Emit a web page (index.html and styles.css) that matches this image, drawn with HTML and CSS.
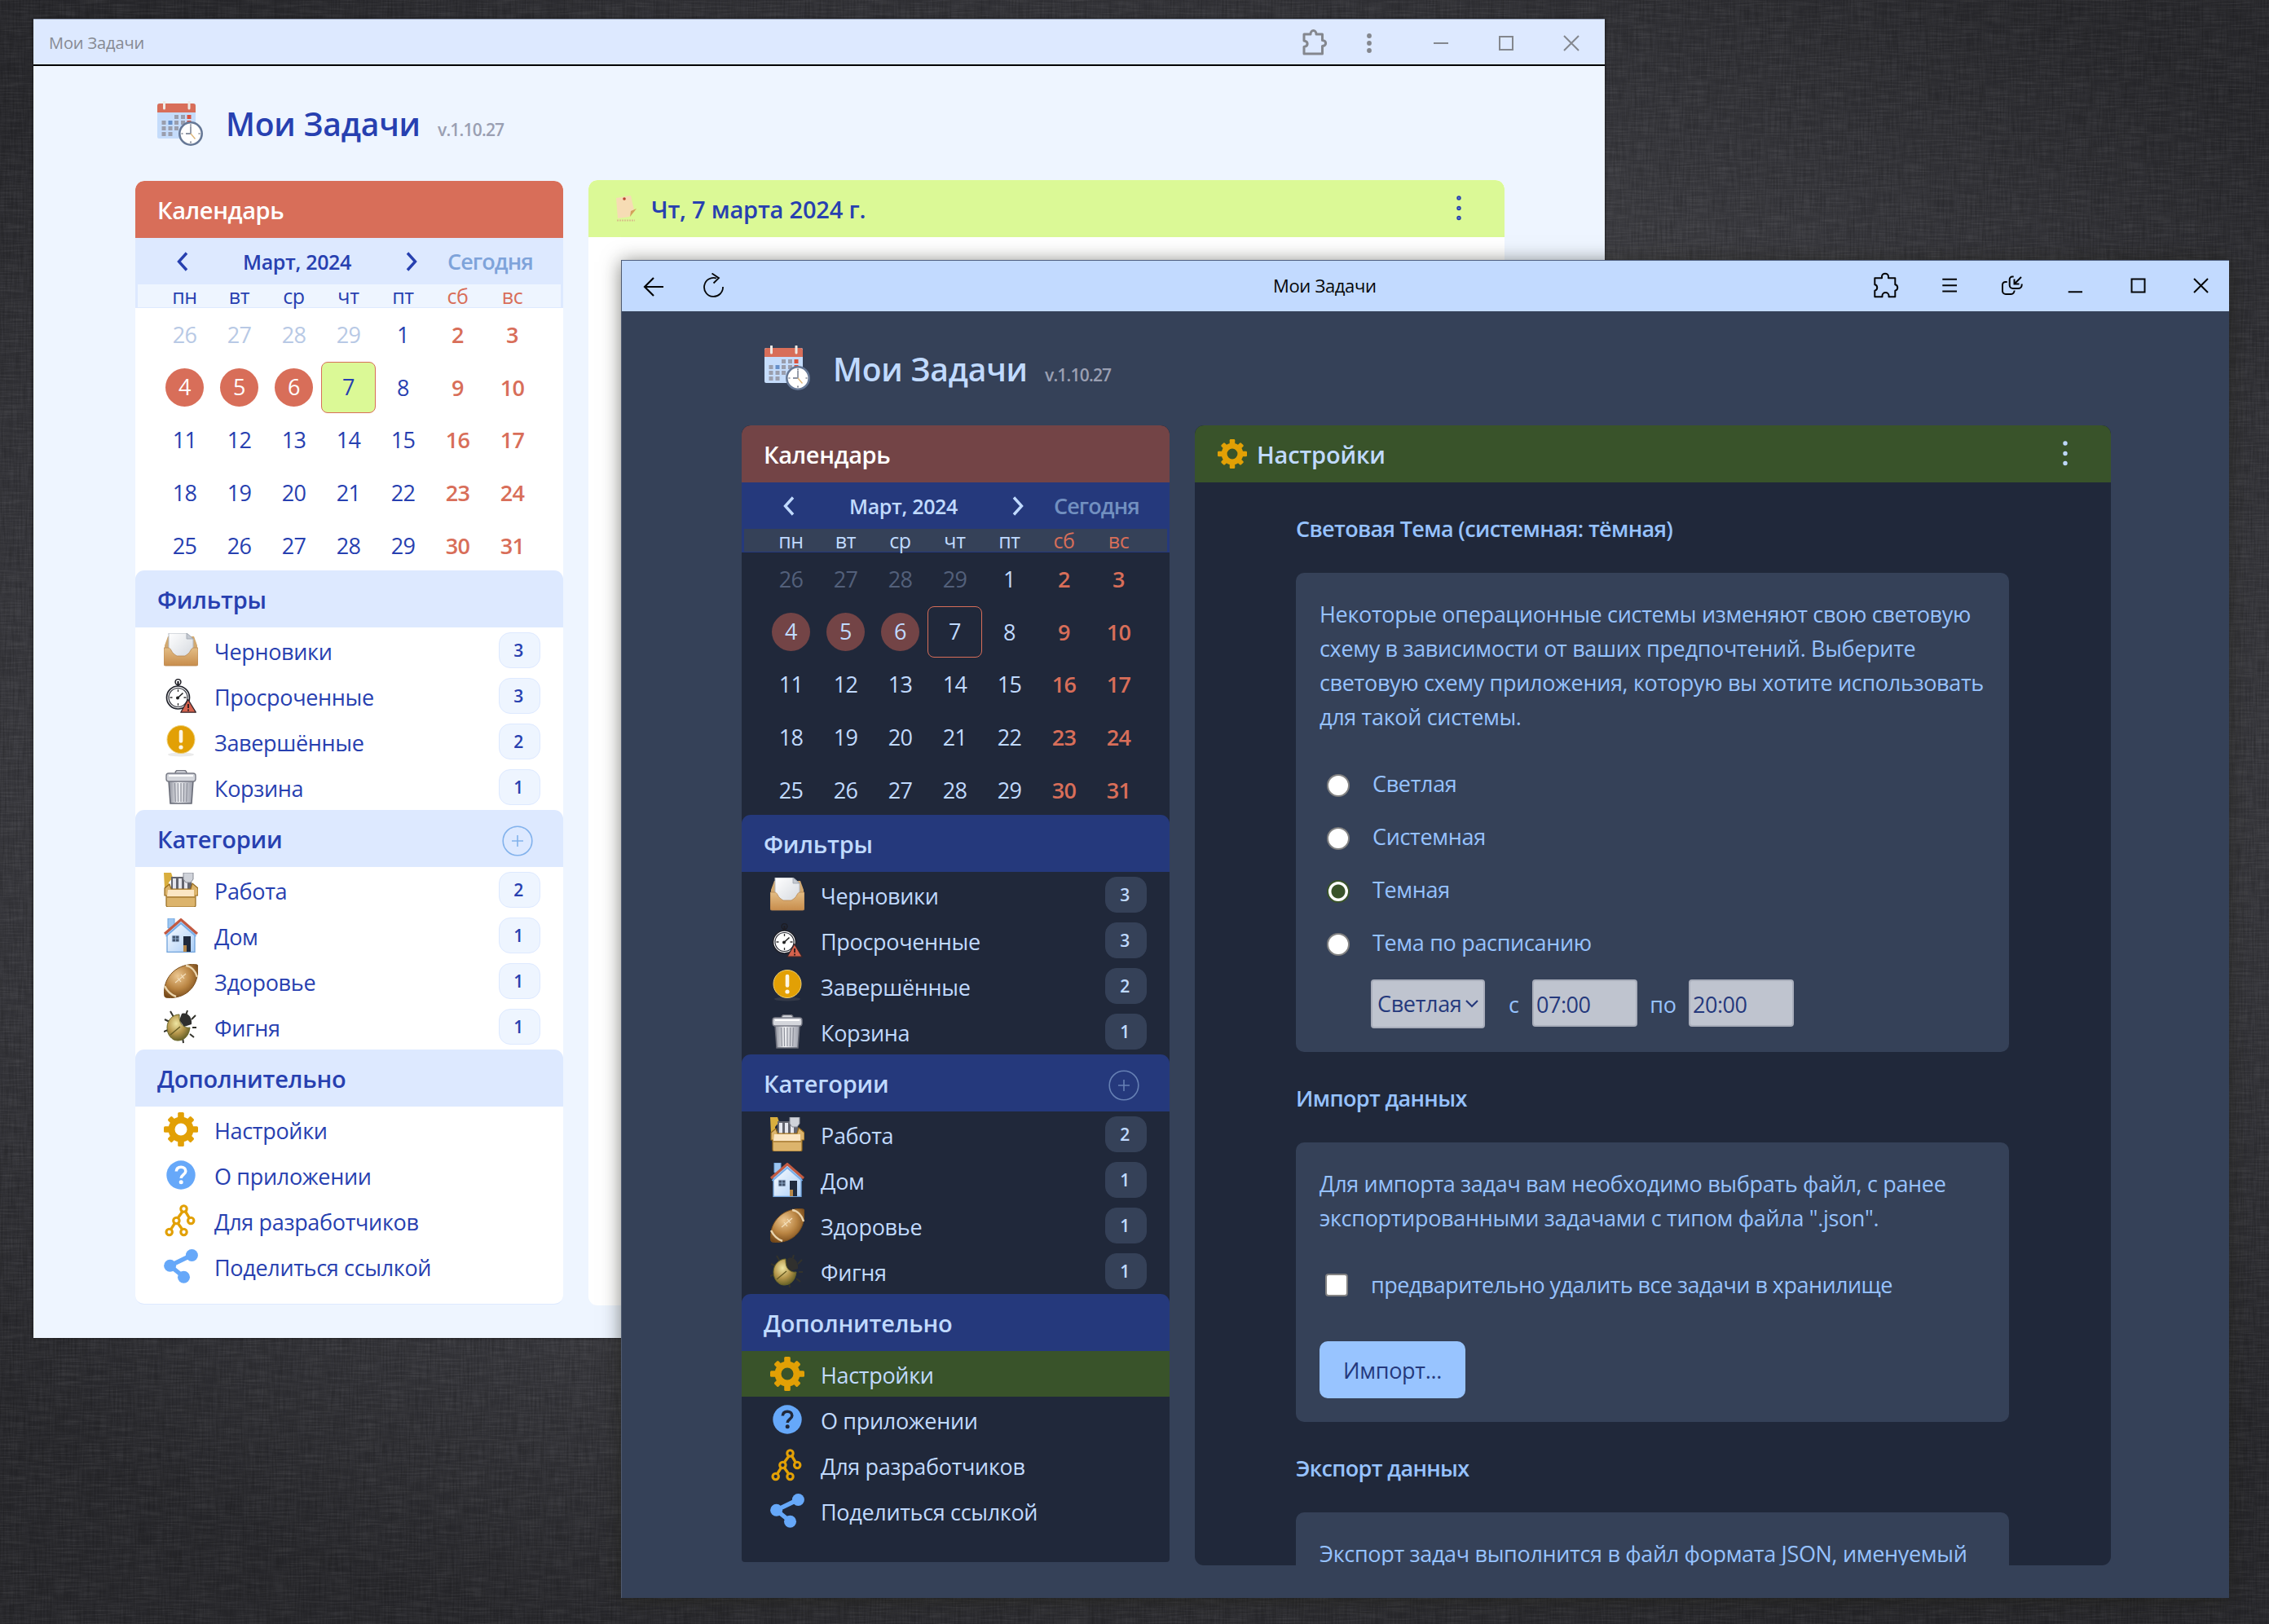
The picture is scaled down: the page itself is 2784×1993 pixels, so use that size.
FILE: index.html
```html
<!DOCTYPE html>
<html lang="ru">
<head>
<meta charset="utf-8">
<title>Мои Задачи</title>
<link rel="stylesheet" href="styles.css">
</head>
<body>
<svg class="defs" width="0" height="0" aria-hidden="true">
  <defs>
    <linearGradient id="g-wood" x1="0" y1="0" x2="0" y2="1"><stop offset="0" stop-color="#e3bd85"/><stop offset="1" stop-color="#c88d4c"/></linearGradient>
    <linearGradient id="g-paper" x1="0" y1="0" x2="1" y2="1"><stop offset="0" stop-color="#ffffff"/><stop offset="1" stop-color="#d5d9df"/></linearGradient>
    <linearGradient id="g-steel" x1="0" y1="0" x2="1" y2="0"><stop offset="0" stop-color="#8d909b"/><stop offset=".4" stop-color="#f1f2f5"/><stop offset="1" stop-color="#9b9eaa"/></linearGradient>
    <linearGradient id="g-wall" x1="0" y1="0" x2="1" y2="1"><stop offset="0" stop-color="#ffffff"/><stop offset="1" stop-color="#a9cdf7"/></linearGradient>
    <radialGradient id="g-ball" cx=".4" cy=".35" r=".7"><stop offset="0" stop-color="#edc892"/><stop offset=".55" stop-color="#b98442"/><stop offset="1" stop-color="#714517"/></radialGradient>
    <radialGradient id="g-bug" cx=".4" cy=".35" r=".7"><stop offset="0" stop-color="#efe6a2"/><stop offset=".55" stop-color="#b4954a"/><stop offset="1" stop-color="#5d5a22"/></radialGradient>
  </defs>
  <symbol id="i-logo" viewBox="0 0 57 56">
    <rect x="0" y="3" width="47" height="43" rx="2" fill="#c5dcfb"/>
    <path d="M0 14V6a3 3 0 0 1 3-3h41a3 3 0 0 1 3 3v8z" fill="#d86e59"/>
    <path d="M8.500 1v8M39 1v8" stroke="#eeeae6" stroke-width="3" stroke-linecap="round"/>
    <g fill="#9a9ead"><path d="M21 17h5v5h-5zM29 17h5v5h-5zM5.500 24h5v5h-5zM21 24h5v5h-5zM29 24h5v5h-5zM5.500 31h5v5h-5zM13.500 31h5v5h-5zM21 31h5v5h-5zM5.500 38h5v5h-5zM13.500 38h5v5h-5z"/></g>
    <path d="M13.500 24h5v5h-5z" fill="#6790c9"/>
    <path d="M36.500 17h5v5h-5zM36.500 24h5v4h-5z" fill="#d8523d"/>
    <circle cx="41" cy="40" r="13.700" fill="#fff" stroke="#667896" stroke-width="2.600"/>
    <path d="M41 31v9h-6" fill="none" stroke="#8c93a2" stroke-width="1.800"/><path d="M41 40l5.500 6.500" stroke="#ddb67a" stroke-width="1.400"/>
    <path d="M41 28.500v2M41 49.500v2M29.500 40h2M50.500 40h2" stroke="#444c60" stroke-width="1.200"/>
  </symbol>
  <symbol id="i-gear" viewBox="0 0 42 42">
    <circle cx="21" cy="21" r="11.500" fill="none" stroke="#e2a005" stroke-width="8"/>
    <g fill="#e2a005"><rect x="17.200" y="0" width="7.600" height="9" rx="1.500"/><rect x="17.200" y="33" width="7.600" height="9" rx="1.500"/><rect y="17.200" x="0" height="7.600" width="9" rx="1.500"/><rect y="17.200" x="33" height="7.600" width="9" rx="1.500"/>
    <g transform="rotate(45 21 21)"><rect x="17.500" y="1" width="7" height="9" rx="1.500"/><rect x="17.500" y="32" width="7" height="9" rx="1.500"/><rect y="17.500" x="1" height="7" width="9" rx="1.500"/><rect y="17.500" x="32" height="7" width="9" rx="1.500"/></g></g>
  </symbol>
  <symbol id="i-help" viewBox="0 0 42 42">
    <circle cx="21" cy="21" r="17.700" fill="#66a8f9"/>
    <path d="M15.300 16.500c.2-3.300 2.500-5.200 5.800-5.200s5.700 1.900 5.700 4.900c0 4.400-5.600 4.600-5.600 8.800" fill="none" stroke="var(--panel)" stroke-width="3.600"/><circle cx="21.200" cy="29.700" r="2.500" fill="var(--panel)"/>
  </symbol>
  <symbol id="i-tree" viewBox="0 0 42 42">
    <g fill="none" stroke="#e2a005" stroke-width="3.100"><path d="M22.700 10.200l-5.300 7.400M26.800 10.200l4.400 7.400M13.200 24.600l-4.500 7M17.500 24.600l5 7" stroke-width="3.400"/><circle cx="24.500" cy="6.500" r="3.700"/><circle cx="15.400" cy="21" r="3.700"/><circle cx="33.200" cy="21" r="3.700"/><circle cx="6.700" cy="35" r="3.700"/><circle cx="24.500" cy="35" r="3.700"/></g>
  </symbol>
  <symbol id="i-share" viewBox="0 0 42 42">
    <path d="M34.400 7.300L7.500 20.300l17 13.700" fill="none" stroke="#66a8f9" stroke-width="5.400"/><g fill="#66a8f9"><circle cx="34.400" cy="7.500" r="7.500"/><circle cx="7.600" cy="20.300" r="7.500"/><circle cx="24.500" cy="34.200" r="7.500"/></g>
  </symbol>
  <symbol id="i-tray" viewBox="0 0 42 42">
    <path d="M1 15L5 4h32l4 11v24H1z" fill="#d2a970"/>
    <path d="M6 0h22l8 7v22H6z" fill="url(#g-paper)" stroke="#b4b9c1"/><path d="M28 0v7h8z" fill="#c4c9d1" stroke="#9da3ad" stroke-width=".8"/>
    <path d="M0 18h5c2 0 3 1 4 3 2 4 4 5 7 7h10c3-2 5-3 7-7 1-2 2-3 4-3h5v20a2 2 0 0 1-2 2H2a2 2 0 0 1-2-2z" fill="url(#g-wood)" stroke="#b98954" stroke-width=".8"/>
  </symbol>
  <symbol id="i-watch" viewBox="0 0 42 42">
    <circle cx="17.500" cy="4" r="3.400" fill="none" stroke="#1d1d24" stroke-width="1.500"/><path d="M17.500 3v6" stroke="#1d1d24" stroke-width="2.200"/>
    <circle cx="17.500" cy="23" r="14" fill="#fff" stroke="#20222b" stroke-width="1.700"/><circle cx="17.500" cy="23" r="11.500" fill="none" stroke="#20222b" stroke-width="1.100"/>
    <path d="M17.500 13v3M17.500 30v3M7.500 23h3M24.500 23h3" stroke="#333" stroke-width="1.300"/><path d="M16 24.500l7.500-7" stroke="#222" stroke-width="1.600"/><circle cx="17" cy="23.500" r="2" fill="#222"/>
    <path d="M29.800 25.500L39.300 41.200H20.800z" fill="#d5624d" stroke="#34252a" stroke-width="1.300" stroke-linejoin="round"/><path d="M30 31v5M30 37.500v2" stroke="#3b2020" stroke-width="2"/>
  </symbol>
  <symbol id="i-warn" viewBox="0 0 42 42">
    <ellipse cx="21" cy="37" rx="16" ry="2.500" fill="#8a8a8a" opacity=".18"/><circle cx="21" cy="18.500" r="17" fill="#e2a005" stroke="#edcf74" stroke-width="1"/><path d="M21 9v11.500" stroke="#fdf6e4" stroke-width="4.600" stroke-linecap="round"/><circle cx="21" cy="28" r="2.600" fill="#fdf6e4"/>
  </symbol>
  <symbol id="i-trash" viewBox="0 0 42 42">
    <path d="M14 4c0-2 1-3.500 3-3.500h8c2 0 3 1.500 3 3.500" fill="#d6d8de" stroke="#73757f" stroke-width="1.500"/><path d="M6 13h30l-2 28H8z" fill="url(#g-steel)" stroke="#666975" stroke-width="1.500"/>
    <path d="M13.500 16l.8 23M21 16v23M28.500 16l-.8 23M17.300 16l.3 23M24.700 16l-.3 23" stroke="#8e919c" stroke-width="1.200"/><rect x="3" y="4" width="36" height="10" rx="3" fill="#d4d6dc" stroke="#777a85" stroke-width="1.400"/><path d="M6 7h30" stroke="#fff" stroke-width="2"/>
  </symbol>
  <symbol id="i-tools" viewBox="0 0 42 42">
    <path d="M0 0h9l2 6-5 6v8H1z" fill="#d9ae3e"/><path d="M9 5h25v17H9z" fill="#64656f"/><path d="M11 7h4v14h-4zM18 7h4v14h-4zM25 7h4v14h-4z" fill="#e6e7ee"/><path d="M24 0h12v8l-3 4h-6l-3-4z" fill="#d0d3da" stroke="#888b95"/>
    <path d="M1 19l6-5 2 6h24l2-7 7 6v9h-3v12a2 2 0 0 1-2 2H5a2 2 0 0 1-2-2V28H1z" fill="#dcb46c" stroke="#94691d" stroke-width="1.200"/><path d="M5 21h32v8H4z" fill="#fbe6c4"/><path d="M4 30h34" stroke="#a97e37" stroke-width="1.500"/>
  </symbol>
  <symbol id="i-house" viewBox="0 0 42 42">
    <path d="M5 0h8v12H5z" fill="#9dc6f1" stroke="#6da3df"/><path d="M4 18L21 3l17 15v23.500H4z" fill="url(#g-wall)" stroke="#6fa2db" stroke-width="1.300"/>
    <path d="M1 19L21 1.500 41 19" fill="none" stroke="#c35a41" stroke-width="3"/><path d="M2.500 22L21 6 39.500 22" fill="none" stroke="#78aee9" stroke-width="2.200"/>
    <path d="M10 21h9v8h-9z" fill="#42536c" stroke="#c6dcf5"/><path d="M14.500 21v8M10 25h9" stroke="#9bb6d6" stroke-width=".8"/><path d="M24 22h9v19h-9z" fill="#202b3e"/><path d="M24 33h4v8h-4z" fill="#b78849"/>
  </symbol>
  <symbol id="i-ball" viewBox="0 0 42 42">
    <path d="M1 40C-2 24 8 3 33 .5c4-.3 8 0 8.500 1C44 20 34 40 10 41.500c-4 .2-8 .2-9-1.500z" fill="url(#g-ball)" stroke="#7b501e" stroke-width="1"/><path d="M27 2c7 1 12 7 14 14M1 27c3 6 8 11 14 13" fill="none" stroke="#ead5ae" stroke-width="2.500"/><path d="M14 23l13-11M17 17l4 5M21 13l4 5" stroke="#f3dfbc" stroke-width="1.200"/>
  </symbol>
  <symbol id="i-bug" viewBox="0 0 42 42">
    <path class="legs" d="M12 9l-4-7M27 7l2-6M34 12l5-5M35 22h5M32 30l5 4M23 34l1 7M7 15l-6-3M5 25l-5 2" stroke-width="2"/>
    <path d="M22 5c7-2 13 4 12 13l-9 3-6-8z" class="bughead"/><path d="M19 6c-8 0-15 7-15 16 0 9 6 16 13 16 8 0 14-6 15-16-5 1-10-2-12-7-1-3-1-6-1-9z" fill="url(#g-bug)" stroke="#6a6728"/><path d="M8 31l12-10" stroke="#655a22" stroke-width="1.300"/>
  </symbol>
  <symbol id="i-dots" viewBox="0 0 10 34"><g fill="#b9c8ea" stroke="currentColor" stroke-width="2"><circle cx="5" cy="4" r="1.700"/><circle cx="5" cy="16.500" r="1.700"/><circle cx="5" cy="28.500" r="1.700"/></g></symbol>
  <symbol id="i-prev" viewBox="0 0 14 24"><path d="M12 1.500L2.500 12 12 22.500" fill="none" stroke="currentColor" stroke-width="3.400"/></symbol>
  <symbol id="i-next" viewBox="0 0 14 24"><path d="M2 1.500L11.500 12 2 22.500" fill="none" stroke="currentColor" stroke-width="3.400"/></symbol>
  <symbol id="i-plus" viewBox="0 0 38 38"><circle cx="19" cy="19" r="17.800" fill="none" stroke="currentColor" stroke-width="1.600"/><path d="M12 19h14M19 12v14" stroke="currentColor" stroke-width="1.600"/></symbol>
</svg>

<svg class="linen" aria-hidden="true">
  <filter id="weft" x="0" y="0" width="100%" height="100%"><feTurbulence type="fractalNoise" baseFrequency="0.03 0.5" numOctaves="2" seed="4"/><feColorMatrix values="0 0 0 0 1  0 0 0 0 1  0 0 0 0 1  1.200 0 0 0 -.45"/></filter>
  <filter id="warp" x="0" y="0" width="100%" height="100%"><feTurbulence type="fractalNoise" baseFrequency="0.5 0.03" numOctaves="2" seed="9"/><feColorMatrix values="0 0 0 0 0  0 0 0 0 0  0 0 0 0 0  1.200 0 0 0 -.4"/></filter>
  <rect width="100%" height="100%" filter="url(#weft)" opacity=".12"/><rect width="100%" height="100%" filter="url(#warp)" opacity=".3"/>
</svg>

<main class="window light">
  <header class="titlebar">
    <span class="caption">Мои Задачи</span>
    <svg class="controls" viewBox="0 0 360 40" fill="none" stroke="#84878e" stroke-width="2">
      <path d="M3 9h8c0-6 7-6 7 0h7.500v7.500c5.500 0 5.500 7 0 7V33H3v-8.500c5.500-1 5.500-6.500 0-7.500z" stroke-width="3" stroke-linejoin="round"/>
      <g fill="#84878e" stroke="none"><circle cx="83" cy="11" r="2.900"/><circle cx="83" cy="20" r="2.900"/><circle cx="83" cy="29" r="2.900"/></g>
      <path d="M162 20h18M243 12h16v16h-16zM322 11l18 18M340 11l-18 18"/>
    </svg>
  </header>
  <div class="brand"><svg class="logo"><use href="#i-logo"/></svg><h1>Мои Задачи</h1><span class="version">v.1.10.27</span></div>
  <div class="columns">
    <aside class="sidebar">
      <h2 class="head cal-head">Календарь</h2>
      <div class="nav"><svg class="chev"><use href="#i-prev"/></svg><b class="month">Март, 2024</b><svg class="chev"><use href="#i-next"/></svg><b class="today-link">Сегодня</b></div>
      <div class="weekdays"><span>пн</span><span>вт</span><span>ср</span><span>чт</span><span>пт</span><span class="we">сб</span><span class="we">вс</span></div>
      <div class="days">
        <span class="out">26</span><span class="out">27</span><span class="out">28</span><span class="out">29</span><span>1</span><b>2</b><b>3</b>
        <span class="task"><i>4</i></span><span class="task"><i>5</i></span><span class="task"><i>6</i></span><span class="current">7</span><span>8</span><b>9</b><b>10</b>
        <span>11</span><span>12</span><span>13</span><span>14</span><span>15</span><b>16</b><b>17</b>
        <span>18</span><span>19</span><span>20</span><span>21</span><span>22</span><b>23</b><b>24</b>
        <span>25</span><span>26</span><span>27</span><span>28</span><span>29</span><b>30</b><b>31</b>
      </div>
      <h2 class="head">Фильтры</h2>
      <ul>
        <li><svg><use href="#i-tray"/></svg><span>Черновики</span><em>3</em></li>
        <li><svg><use href="#i-watch"/></svg><span>Просроченные</span><em>3</em></li>
        <li><svg><use href="#i-warn"/></svg><span>Завершённые</span><em>2</em></li>
        <li><svg><use href="#i-trash"/></svg><span>Корзина</span><em>1</em></li>
      </ul>
      <h2 class="head">Категории<svg class="plus"><use href="#i-plus"/></svg></h2>
      <ul>
        <li><svg><use href="#i-tools"/></svg><span>Работа</span><em>2</em></li>
        <li><svg><use href="#i-house"/></svg><span>Дом</span><em>1</em></li>
        <li><svg><use href="#i-ball"/></svg><span>Здоровье</span><em>1</em></li>
        <li><svg><use href="#i-bug"/></svg><span>Фигня</span><em>1</em></li>
      </ul>
      <h2 class="head">Дополнительно</h2>
      <ul>
        <li><svg><use href="#i-gear"/></svg><span>Настройки</span></li>
        <li><svg><use href="#i-help"/></svg><span>О приложении</span></li>
        <li><svg><use href="#i-tree"/></svg><span>Для разработчиков</span></li>
        <li><svg><use href="#i-share"/></svg><span>Поделиться ссылкой</span></li>
      </ul>
    </aside>
    <section class="content">
      <h2 class="head page-head">
        <svg class="note" viewBox="0 0 28 34"><path d="M2 4l18-3 4 18-6 8-14 2z" fill="#f6dcb4"/><path d="M27 17l-8 10 1-7z" fill="#d3a15a"/><circle cx="12" cy="5" r="1.800" fill="#b9442f"/><path d="M3 31.500h22" stroke="#d9c08a" stroke-width="2" stroke-dasharray="2 1"/></svg>
        <span class="date">Чт, 7 марта 2024 г.</span><svg class="dots"><use href="#i-dots"/></svg></h2>
    </section>
  </div>
</main>

<main class="window dark">
  <header class="titlebar">
    <svg class="browse" viewBox="0 0 100 34" fill="none" stroke="#050608" stroke-width="2">
      <path d="M25 17H2M13 6L2 17l11 11" stroke-width="2.200"/><path d="M98 17a11.500 11.500 0 1 1-8-10.500M84.500 .5L93 6.200 86.500 12.500" stroke-width="1.800"/>
    </svg>
    <span class="caption">Мои Задачи</span>
    <svg class="controls" viewBox="0 0 420 40" fill="none" stroke="#050608" stroke-width="2">
      <path d="M2.300 10.300H11V8.500a4 3.800 0 0 1 8 0v1.800h8.300v8a3.800 3.800 0 0 1 0 7.400v7.600h-7.800v-1.500a4 3.800 0 0 0-8 0v1.500H2.300v-7.600a3.800 3.800 0 0 0 0-7.400z" stroke-linejoin="round"/>
      <path d="M85.300 11.800h17.700M85.300 19.300h17.700M85.300 26.500h17.700"/>
      <path d="M172.700 8.500h-1.500a3.500 3.500 0 0 0-3.500 3.500v7a4 4 0 0 0 4 4h6.500a4.500 4.500 0 0 0 4.500-4.500V17.500M182 9l-8.500 8.500M173.500 11.500v6h6M164.700 15h-2.200a3.500 3.500 0 0 0-3.500 3.500V26a4 4 0 0 0 4 4h6.500a4 4 0 0 0 4-4.500"/>
      <path d="M239.700 27.300h17.300M317.500 11.500h16v16h-16zM394 11l17 17M411 11L394 28"/>
    </svg>
  </header>
  <div class="brand"><svg class="logo"><use href="#i-logo"/></svg><h1>Мои Задачи</h1><span class="version">v.1.10.27</span></div>
  <div class="columns">
    <aside class="sidebar">
      <h2 class="head cal-head">Календарь</h2>
      <div class="nav"><svg class="chev"><use href="#i-prev"/></svg><b class="month">Март, 2024</b><svg class="chev"><use href="#i-next"/></svg><b class="today-link">Сегодня</b></div>
      <div class="weekdays"><span>пн</span><span>вт</span><span>ср</span><span>чт</span><span>пт</span><span class="we">сб</span><span class="we">вс</span></div>
      <div class="days">
        <span class="out">26</span><span class="out">27</span><span class="out">28</span><span class="out">29</span><span>1</span><b>2</b><b>3</b>
        <span class="task"><i>4</i></span><span class="task"><i>5</i></span><span class="task"><i>6</i></span><span class="current">7</span><span>8</span><b>9</b><b>10</b>
        <span>11</span><span>12</span><span>13</span><span>14</span><span>15</span><b>16</b><b>17</b>
        <span>18</span><span>19</span><span>20</span><span>21</span><span>22</span><b>23</b><b>24</b>
        <span>25</span><span>26</span><span>27</span><span>28</span><span>29</span><b>30</b><b>31</b>
      </div>
      <h2 class="head">Фильтры</h2>
      <ul>
        <li><svg><use href="#i-tray"/></svg><span>Черновики</span><em>3</em></li>
        <li><svg><use href="#i-watch"/></svg><span>Просроченные</span><em>3</em></li>
        <li><svg><use href="#i-warn"/></svg><span>Завершённые</span><em>2</em></li>
        <li><svg><use href="#i-trash"/></svg><span>Корзина</span><em>1</em></li>
      </ul>
      <h2 class="head">Категории<svg class="plus"><use href="#i-plus"/></svg></h2>
      <ul>
        <li><svg><use href="#i-tools"/></svg><span>Работа</span><em>2</em></li>
        <li><svg><use href="#i-house"/></svg><span>Дом</span><em>1</em></li>
        <li><svg><use href="#i-ball"/></svg><span>Здоровье</span><em>1</em></li>
        <li><svg><use href="#i-bug"/></svg><span>Фигня</span><em>1</em></li>
      </ul>
      <h2 class="head">Дополнительно</h2>
      <ul>
        <li class="active"><svg><use href="#i-gear"/></svg><span>Настройки</span></li>
        <li><svg><use href="#i-help"/></svg><span>О приложении</span></li>
        <li><svg><use href="#i-tree"/></svg><span>Для разработчиков</span></li>
        <li><svg><use href="#i-share"/></svg><span>Поделиться ссылкой</span></li>
      </ul>
    </aside>
    <section class="content">
      <h2 class="head page-head"><svg class="gear"><use href="#i-gear"/></svg><span>Настройки</span><svg class="dots"><use href="#i-dots"/></svg></h2>
      <div class="settings">
        <h3>Световая Тема (системная: тёмная)</h3>
        <div class="card">
          <p>Некоторые операционные системы изменяют свою световую<br>схему в зависимости от ваших предпочтений. Выберите<br>световую схему приложения, которую вы хотите использовать<br>для такой системы.</p>
          <div class="options">
            <label><i class="radio"></i>Светлая</label>
            <label><i class="radio"></i>Системная</label>
            <label><i class="radio on"></i>Темная</label>
            <label><i class="radio"></i>Тема по расписанию</label>
          </div>
          <div class="schedule">
            <span class="field select">Светлая<svg viewBox="0 0 16 10"><path d="M1 1l7 7 7-7" fill="none" stroke="currentColor" stroke-width="2.200"/></svg></span>
            <span class="from">с</span><span class="field time">07:00</span><span class="to">по</span><span class="field time">20:00</span>
          </div>
        </div>
        <h3>Импорт данных</h3>
        <div class="card">
          <p>Для импорта задач вам необходимо выбрать файл, с ранее<br>экспортированными задачами с типом файла ".json".</p>
          <label class="purge"><i class="box"></i>предварительно удалить все задачи в хранилище</label>
          <button>Импорт...</button>
        </div>
        <h3>Экспорт данных</h3>
        <div class="card"><p>Экспорт задач выполнится в файл формата JSON, именуемый</p></div>
      </div>
    </section>
  </div>
</main>
</body>
</html>
```
FILE: styles.css
```css
* { box-sizing: border-box; }
body {
  margin: 0;
  width: 2784px;
  height: 1993px;
  position: relative;
  overflow: hidden;
  font-family: "Open Sans", "Noto Sans", sans-serif;
  font-size: 27px;
  letter-spacing: -0.33px;
  white-space: nowrap;
  background: radial-gradient(ellipse 1900px 1150px at 50% 47%, #646468 0%, #37373c 75%, #29292d 100%);
}
h1, h2, h3, p, ul { margin: 0; padding: 0; font-weight: 600; }
ul { list-style: none; }
svg { display: block; flex: none; }
.defs, .linen { position: absolute; left: 0; top: 0; }
.linen { width: 100%; height: 100%; }

/* themes */
.light {
  --page: #eef5ff; --bar: #dde9ff; --panel: #ffffff; --text: #2740b0;
  --accent: #d86e59; --selected: #dbf996; --head: #dde9ff; --muted: #7ea3da;
  --out: #b8c9e5; --badge: #eef5ff; --badge-line: #dde9ff; --plus: #82b2ec; --cal-text: #fff;
}
.dark {
  --page: #354158; --bar: #c2daff; --panel: #20283a; --text: #c0daff;
  --accent: #734446; --selected: #39532a; --head: #25397c; --muted: #7290c0;
  --out: #53607a; --badge: #354158; --badge-line: #354158; --plus: #6680b4; --cal-text: #fff;
}

.window { position: absolute; background: var(--page); color: var(--text); display: flex; flex-direction: column; }
.light.window { left: 41px; top: 23px; width: 1928px; height: 1619px; box-shadow: 0 0 3px #111; border-top: 1px solid #9aa6bd; }
.dark.window { left: 762px; top: 319px; width: 1973px; height: 1642px; box-shadow: 0 2px 22px rgba(30, 30, 20, .55); border-top: 1px solid #4f5f80; border-left: 1px solid #4f5a70; }

.titlebar { flex: none; display: flex; align-items: center; background: var(--bar); }
.light .titlebar { height: 57px; border-bottom: 2px solid #000; padding-left: 19px; color: #868a92; justify-content: space-between; }
.light .caption { font-size: 20px; padding-top: 1px; letter-spacing: -0.1px; }
.light .controls { width: 360px; height: 40px; margin: 3px 12px 0 0; }
.dark .titlebar { height: 62px; color: #050608; padding-left: 26px; }
.browse { width: 100px; height: 34px; margin-top: 1px; }
.dark .caption { font-size: 22px; width: 126px; margin-left: 673px; margin-right: 610px; margin-top: -2px; }
.dark .controls { width: 420px; height: 40px; }

.brand { flex: none; height: 141px; display: flex; align-items: baseline; padding-left: 152px; }
.dark .brand { height: 140px; padding-left: 175px; }
.logo { width: 57px; height: 56px; align-self: center; margin-right: 27px; }
.brand h1 { font-size: 39px; line-height: 142px; font-weight: 600; width: 260px; letter-spacing: -0.2px; }
.version { font-size: 21px; font-weight: 600; color: #9a9fb2; letter-spacing: -0.8px; }

.columns { flex: 1; min-height: 0; display: flex; gap: 31px; padding: 0 123px 0 125px; }
.dark .columns { padding: 0 145px 0 147px; }
.sidebar { width: 525px; flex: none; background: var(--panel); border-radius: 11px; overflow: hidden; }
.light .sidebar { height: 1379px; border-bottom: 1px solid #dde9ff; }
.dark .sidebar { height: 1395px; border-radius: 11px 11px 4px 4px; }
.content { flex: 1; background: var(--panel); border-radius: 11px; overflow: hidden; }
.light .content { height: 1381px; margin-top: -1px; }
.dark .content { height: 1399px; }

.head { height: 70px; display: flex; align-items: center; padding: 0 37px 0 27px; font-size: 29px; letter-spacing: -0.2px; background: var(--head); border-radius: 11px 11px 0 0; }
.cal-head { background: var(--accent); color: var(--cal-text); letter-spacing: -0.4px; }
.plus { width: 38px; height: 38px; margin-left: auto; margin-top: 5px; color: var(--plus); }
.page-head { background: var(--selected); padding-left: 28px; padding-right: 38px; }
.note { width: 28px; height: 34px; margin: 0 17px 0 4px; }
.gear { width: 36px; height: 36px; margin-right: 12px; }
.dots { width: 10px; height: 34px; margin-left: auto; margin-right: 13px; }

.nav { height: 57px; display: flex; align-items: center; padding-left: 51px; background: var(--head); }
.nav b { font-weight: 600; }
.chev { width: 14px; height: 24px; }
.month { width: 267px; text-align: center; font-size: 25px; padding-top: 1px; }
.today-link { color: var(--muted); margin-left: 37px; font-size: 27px; letter-spacing: -0.9px; }
.weekdays, .days { display: grid; grid-template-columns: repeat(7, 67px); text-align: center; }
.weekdays { height: 29px; line-height: 29px; font-size: 25px; padding-left: 24px; background: var(--page); border: 3px solid var(--head); border-width: 0 3px 1px; }
.we { color: #d86e59; }
.days { height: 322px; grid-template-rows: repeat(5, 64.8px); padding-left: 27px; font-size: 27px; align-items: center; letter-spacing: -0.6px; }
.days b { color: #d86e59; font-weight: 600; }
.out { color: var(--out); }
.task i { display: block; width: 47px; height: 47px; line-height: 46px; margin: 0 auto; border-radius: 50%; background: var(--accent); color: #fff; font-style: normal; }
.dark .task i { color: var(--text); }
.current { height: 63px; line-height: 60px; border: 1px solid #d86e59; border-radius: 8px; background: var(--selected); }
.dark .current { background: none; }

li { height: 56px; display: flex; align-items: center; padding: 0 28px 0 35px; font-weight: 400; }
li svg { width: 42px; height: 42px; margin-right: 20px; }
li span { padding-top: 2px; }
li em { margin-left: auto; width: 51px; height: 44px; line-height: 42px; padding-right: 3px; text-align: center; font-style: normal; font-size: 21px; font-weight: 600; background: var(--badge); border: 1px solid var(--badge-line); border-radius: 14px; }
.active { background: var(--selected); }
.legs { stroke: #33332c; }
.bughead { fill: #30302e; }

.settings { padding: 0 125px 0 124px; color: #96c2ff; }
.settings h3 { font-size: 27px; line-height: 113px; height: 111px; letter-spacing: -0.65px; }
.card { background: var(--page); border-radius: 10px; padding: 29px; }
.card p { font-weight: 400; line-height: 42px; padding-top: 1px; }
.options { margin-top: 28px; }
.card label { display: flex; align-items: center; height: 65px; }
.options label { padding-left: 9px; padding-bottom: 1px; }
.radio, .box { width: 28px; height: 28px; background: #fff; border: 2px solid #828282; border-radius: 50%; margin-right: 28px; position: relative; top: 3px; }
.radio.on { border-color: #39532a; background: radial-gradient(circle, #39532a 8px, #fff 9px); }
.schedule { display: flex; align-items: flex-start; height: 60px; margin: 13px 0 0 63px; line-height: 62px; }
.field { height: 58px; line-height: 60px; background: #bfc4cf; color: #25397c; border: 2px solid #a9aebb; border-radius: 4px; padding-left: 3px; }
.select { width: 140px; height: 60px; padding-left: 6px; display: flex; align-items: center; justify-content: space-between; padding-right: 6px; }
.select svg { width: 16px; height: 10px; }
.time { width: 129px; line-height: 58px; letter-spacing: -0.5px; }
.from { width: 58px; padding-left: 29px; }
.to { width: 63px; text-align: center; }
.card .purge { margin-top: 28px; padding-left: 7px; letter-spacing: -0.54px; }
.box { border-radius: 4px; top: 0; }
button { display: block; margin-top: 37px; width: 179px; height: 70px; border: 0; border-radius: 10px; background: #98c4ff; color: #25397c; font: inherit; letter-spacing: inherit; padding: 0; }
```
